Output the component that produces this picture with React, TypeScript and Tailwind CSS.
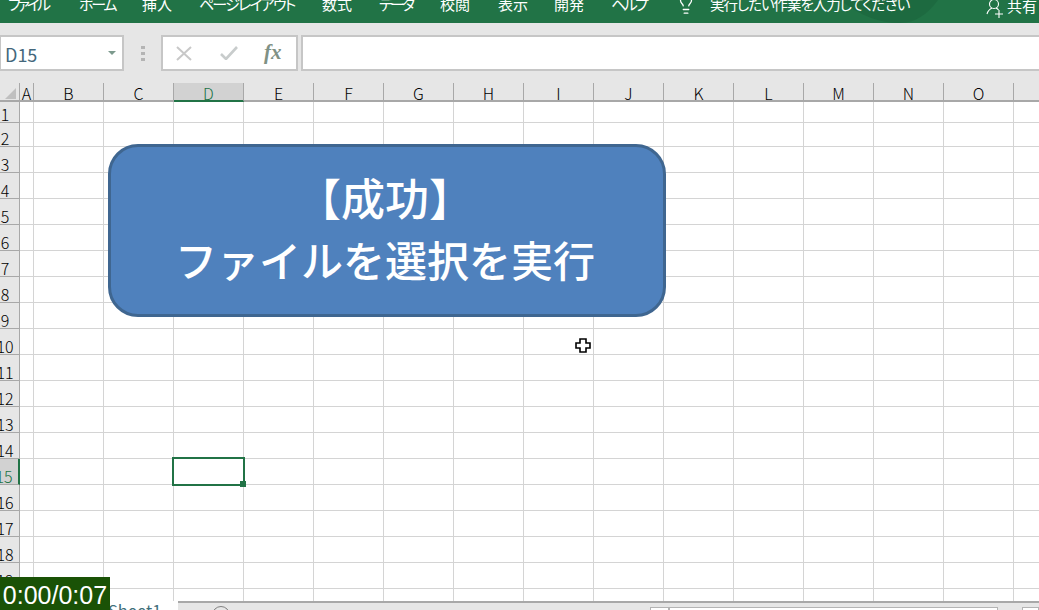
import { Lightbulb } from 'lucide-react';

const tabs = [
  { label: 'ファイル', className: 'ml-[8px] w-[40px] tracking-[-3px]' },
  { label: 'ホーム', className: 'ml-[31px] w-[36px] tracking-[-2.2px]' },
  { label: '挿入', className: 'ml-[27px] w-[30px]' },
  { label: 'ページレイアウト', className: 'ml-[27px] w-[97px] tracking-[-1.8px]' },
  { label: '数式', className: 'ml-[26px] w-[30px]' },
  { label: 'データ', className: 'ml-[27px] w-[35px] tracking-[-3px]' },
  { label: '校閲', className: 'ml-[26px] w-[30px]' },
  { label: '表示', className: 'ml-[28px] w-[29px]' },
  { label: '開発', className: 'ml-[27px] w-[30px]' },
  { label: 'ヘルプ', className: 'ml-[27px] w-[35px] tracking-[-2.6px]' },
];

const columns = ['B', 'C', 'D', 'E', 'F', 'G', 'H', 'I', 'J', 'K', 'L', 'M', 'N', 'O', 'P'];

const rowHeight = (row: number) => {
  if (row === 1) return 'h-[21px]';
  if (row === 2) return 'h-[24px]';
  return 'h-[26px]';
};

const rows = Array.from({ length: 20 }, (_, i) => i + 1);

function Ribbon() {
  return (
    <div className="relative h-[23px] overflow-hidden bg-[#217346] text-white">
      {/* darker swirl behind the search box */}
      <svg className="absolute top-0 left-[820px]" width="140" height="23" viewBox="0 0 140 23">
        <path d="M20 0 C40 16 60 23 80 23 C95 23 108 14 118 0 Z" fill="#1d6a40" />
      </svg>
      <div className="relative -mt-[8px] flex h-[23px] items-center text-[15px] leading-[23px] whitespace-nowrap [font-feature-settings:'palt']">
        {tabs.map((tab) => (
          <span key={tab.label} className={tab.className}>
            {tab.label}
          </span>
        ))}
        <span className="ml-[31px] w-[16px]">
          <Lightbulb size={22} strokeWidth={1.4} className="mt-[1px] -ml-[2px]" />
        </span>
        <span className="ml-[17px] w-[201px] text-[14.5px] tracking-[-1.05px]">実行したい作業を入力してください</span>
        <svg className="mt-[10px] ml-[75px] shrink-0" width="18" height="20" viewBox="0 0 18 20" fill="none" stroke="#fff" strokeWidth="1.1">
          <circle cx="8" cy="5" r="4.5" />
          <path d="M1 15 C2 11 4 10 6 9 M10 9 C11 9.5 12 10 12.5 11" />
          <path d="M13 11 V19 M9 15 H17" />
        </svg>
        <span className="mt-[3px] ml-[3px]">共有</span>
      </div>
    </div>
  );
}

function FormulaBar() {
  return (
    <div className="flex h-[60px] items-start bg-[#e6e6e6] pt-[12px]">
      <div className="-ml-px flex h-[36px] w-[125px] items-center justify-between border-2 border-[#c6c6c6] bg-white pr-[6px] pl-[4px] text-[18px] text-[#44677c]">
        <span className="mt-[2px]">D15</span>
        <span className="h-0 w-0 border-x-[4px] border-t-[4px] border-x-transparent border-t-[#7c9a8d]" />
      </div>
      <div className="flex w-[37px] flex-col items-center gap-[3px] pt-[11px]">
        <span className="h-[3px] w-[4px] bg-[#b4b4b4]" />
        <span className="h-[3px] w-[4px] bg-[#b4b4b4]" />
        <span className="h-[3px] w-[4px] bg-[#b4b4b4]" />
      </div>
      <div className="flex h-[36px] w-[137px] items-center border-2 border-[#c6c6c6] bg-white">
        <svg className="ml-[13px]" width="16" height="15" viewBox="0 0 16 15" fill="none" stroke="#c8c8c8" strokeWidth="2">
          <path d="M1 1 L15 14 M15 1 L1 14" />
        </svg>
        <svg className="ml-[28px]" width="18" height="14" viewBox="0 0 18 14" fill="none" stroke="#c8cccc" strokeWidth="2.6">
          <path d="M1 8 L6 13 L17 1" />
        </svg>
        <span className="mb-[2px] ml-[26px] font-['Liberation_Serif',serif] text-[21px] leading-none font-bold text-[#7f9185] italic">fx</span>
      </div>
      <div className="ml-[3px] h-[36px] flex-1 border-y-2 border-l-2 border-[#c6c6c6] bg-white" />
    </div>
  );
}

function ColumnHeader() {
  return (
    <div className="flex h-[19px] bg-[#e6e6e6] text-[16px] leading-none font-light text-black">
      <div className="flex h-[19px] w-[20px] shrink-0 items-end border-r border-b-2 border-[#a8a8a8] pb-[1px] pl-[5px]">
        <svg width="11" height="11" viewBox="0 0 11 11">
          <path d="M11 0 V11 H0 Z" fill="#c0c0c0" />
        </svg>
      </div>
      <div className="flex w-[14px] shrink-0 items-center justify-center border-r border-b-2 border-[#a8a8a8] pt-[2px]">A</div>
      {columns.map((col) => (
        <div
          key={col}
          className={
            col === 'D'
              ? 'flex w-[70px] shrink-0 items-center justify-center border-r border-b-2 border-r-[#a8a8a8] border-b-[#217346] bg-[#d2d2d2] pt-[2px] text-[#217346]'
              : 'flex w-[70px] shrink-0 items-center justify-center border-r border-b-2 border-[#a8a8a8] pt-[2px]'
          }
        >
          {col !== 'P' && col}
        </div>
      ))}
    </div>
  );
}

function SheetGrid() {
  return (
    <div className="h-[499px] overflow-hidden">
      {rows.map((row) => (
        <div key={row} className={`flex ${rowHeight(row)}`}>
          <div
            className={
              row === 15
                ? 'flex w-[20px] shrink-0 items-end justify-center border-r-2 border-b border-r-[#217346] border-b-[#a8a8a8] bg-[#d2d2d2] pr-[10px] text-[16px] leading-[15px] font-light text-[#217346]'
                : 'flex w-[20px] shrink-0 items-end justify-center border-r border-b border-[#a8a8a8] bg-[#e6e6e6] pr-[9px] text-[16px] leading-[15px] font-light text-black'
            }
          >
            {row}
          </div>
          <div className="w-[14px] shrink-0 border-r border-b border-[#d4d4d4]" />
          {columns.map((col) => (
            <div key={col} className="w-[70px] shrink-0 border-r border-b border-[#d4d4d4]" />
          ))}
        </div>
      ))}
    </div>
  );
}

function BottomBar() {
  return (
    <div className="flex h-[9px] overflow-hidden">
      <div className="w-[178px] shrink-0 bg-white pl-[108px] text-[16.5px] leading-[19px] whitespace-nowrap text-[#3f6f7a]">Sheet1</div>
      <div className="flex flex-1 items-start border-t-2 border-[#a8a8a8] bg-[#e6e6e6]">
        <span className="mt-[3px] ml-[34px] h-[18px] w-[18px] shrink-0 rounded-full border border-[#808080]" />
        <span className="mt-[4px] ml-[420px] h-[10px] w-[19px] shrink-0 border border-[#b4b4b4] bg-white" />
        <span className="mt-[4px] h-[10px] w-[329px] shrink-0 border border-[#b4b4b4] bg-white" />
        <span className="mt-[4px] ml-[24px] h-[10px] flex-1 border border-[#b4b4b4] bg-white" />
      </div>
    </div>
  );
}

export default function App() {
  return (
    <div className="relative flex h-[610px] w-[1039px] flex-col overflow-hidden bg-white font-['Noto_Sans_CJK_JP','Noto_Sans',sans-serif]">
      <Ribbon />
      <FormulaBar />
      <ColumnHeader />
      <SheetGrid />
      <BottomBar />

      {/* shape sitting over the cells */}
      <div className="absolute top-[144px] left-[108px] flex h-[173px] w-[558px] flex-col items-center justify-center rounded-[30px] border-[3px] border-[#3f6690] bg-[#4f81bd] pr-[4px] pb-[6px] text-[42px] leading-[61px] font-medium text-white">
        <span className="text-[44px]">【成功】</span>
        <span>ファイルを選択を実行</span>
      </div>

      {/* active cell */}
      <div className="absolute top-[457px] left-[172px] h-[29px] w-[73px] border-2 border-[#217346]">
        <span className="absolute -right-[3px] -bottom-[3px] h-[6px] w-[6px] bg-[#217346]" />
      </div>

      {/* mouse pointer */}
      <svg className="absolute top-[338px] left-[575px]" width="16" height="15" viewBox="0 0 16 15">
        <path d="M5 1 H11 V5 H15 V10 H11 V14 H5 V10 H1 V5 H5 Z" fill="#fff" stroke="#000" strokeWidth="1.6" />
      </svg>

      {/* video timer */}
      <div className="absolute bottom-0 left-0 flex h-[33px] w-[110px] items-center justify-center bg-[#1a5206] pt-[3px] font-['Liberation_Sans',sans-serif] text-[25px] leading-none text-white">
        0:00/0:07
      </div>
    </div>
  );
}
